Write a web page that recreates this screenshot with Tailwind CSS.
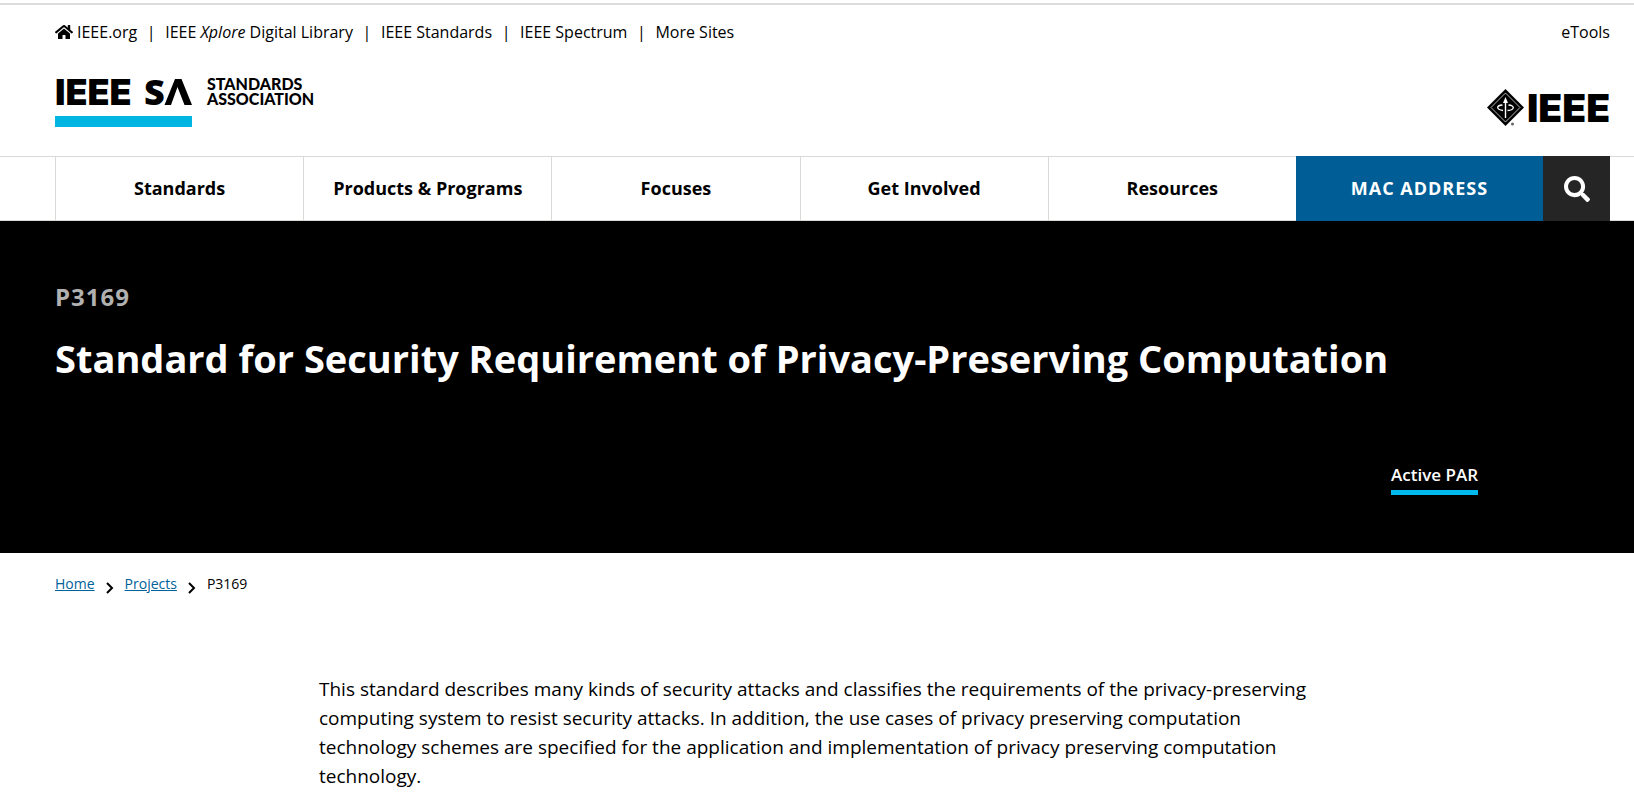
<!DOCTYPE html>
<html lang="en">
<head>
    <meta charset="UTF-8">
    <meta name="viewport" content="width=device-width, initial-scale=1.0">
    <title>IEEE SA - P3169</title>
    <script src="https://cdn.jsdelivr.net/npm/@tailwindcss/browser@4"></script>
</head>
<body class="bg-white text-black font-['Open_Sans',sans-serif]">

    <header class="mt-[3px] border-t-2 border-[#dcdcdc]">
        <!-- Meta navigation -->
        <div class="flex items-center justify-between pl-[55px] pr-6 pt-[15px] text-base leading-6 font-medium">
            <nav class="flex items-center" aria-label="IEEE sites">
                <a href="#" class="flex items-center gap-1">
                    <svg class="w-[18px] h-4" viewBox="0 0 576 512" fill="currentColor" aria-hidden="true">
                        <path d="M280.37 148.26L96 300.11V464a16 16 0 0 0 16 16l112.06-.29a16 16 0 0 0 15.92-16V368a16 16 0 0 1 16-16h64a16 16 0 0 1 16 16v95.64a16 16 0 0 0 16 16.05L464 480a16 16 0 0 0 16-16V300L295.67 148.26a12.19 12.19 0 0 0-15.3 0zM571.6 251.47L488 182.56V44.05a12 12 0 0 0-12-12h-56a12 12 0 0 0-12 12v72.61L318.47 43a48 48 0 0 0-61 0L4.34 251.47a12 12 0 0 0-1.6 16.9l25.5 31A12 12 0 0 0 45.15 301l235.22-193.74a12.19 12.19 0 0 1 15.3 0L530.9 301a12 12 0 0 0 16.9-1.6l25.5-31a12 12 0 0 0-1.7-16.93z"/>
                    </svg>
                    <span>IEEE.org</span>
                </a>
                <span class="w-7 text-center">|</span>
                <a href="#">IEEE <em>Xplore</em> Digital Library</a>
                <span class="w-7 text-center">|</span>
                <a href="#">IEEE Standards</a>
                <span class="w-7 text-center">|</span>
                <a href="#">IEEE Spectrum</a>
                <span class="w-7 text-center">|</span>
                <a href="#">More Sites</a>
            </nav>
            <a href="#">eTools</a>
        </div>

        <!-- Logos -->
        <div class="flex items-start justify-between pl-[55px] pr-6 pt-[21px] pb-[25px]">
            <a href="#" aria-label="IEEE SA Standards Association">
                <svg class="w-[270px] h-[62px]" viewBox="0 -8 270 62" fill="#000" font-family="Lato, sans-serif" font-weight="900">
                    <text x="0" y="32" font-size="36" font-family="Inter, sans-serif">IEEE</text>
                    <text x="89" y="32" font-size="36" font-family="Open Sans, sans-serif">S</text>
                    <path d="M109.500 32L120 6H126.500L137 32H129.500L122.500 14L116 32Z"/>
                    <text x="152" y="17" font-size="16">STANDARDS</text>
                    <text x="152" y="32" font-size="16">ASSOCIATION</text>
                    <rect x="0" y="43" width="137" height="11" fill="#00b5e2"/>
                </svg>
            </a>
            <a href="#" class="pt-5" aria-label="IEEE">
                <svg class="w-[123px] h-[46px]" viewBox="0 -4 123 46" fill="#000">
                    <path d="M18.500 0L37 18.500L18.500 37L0 18.500Z"/>
                    <path d="M18.500 4L33 18.500L18.500 33L4 18.500Z" fill="none" stroke="#fff" stroke-opacity=".7" stroke-width="1"/>
                    <path d="M18.500 8L21 14H19.200V29H17.800V14H16Z" fill="#fff"/>
                    <path d="M16 21.500C9 20.500 9 16.500 15.500 16M21.500 16C28 16.500 28 21 20.500 21.500" fill="none" stroke="#fff" stroke-width="1.300"/>
                    <circle cx="25.500" cy="35" r="1.500" fill="#666"/>
                    <text x="40" y="33" font-family="Inter, sans-serif" font-weight="900" font-size="39">IEEE</text>
                </svg>
            </a>
        </div>

        <!-- Main navigation -->
        <nav class="flex h-[65px] pl-[55px] pr-6 border-y border-[#d9d9d6] text-lg font-bold" aria-label="Main">
            <a href="#" class="flex-1 flex items-center justify-center pb-0.5 border-l border-[#d9d9d6]">Standards</a>
            <a href="#" class="flex-1 flex items-center justify-center pb-0.5 border-l border-[#d9d9d6]">Products &amp; Programs</a>
            <a href="#" class="flex-1 flex items-center justify-center pb-0.5 border-l border-[#d9d9d6]">Focuses</a>
            <a href="#" class="flex-1 flex items-center justify-center pb-0.5 border-l border-[#d9d9d6]">Get Involved</a>
            <a href="#" class="flex-1 flex items-center justify-center pb-0.5 border-l border-[#d9d9d6]">Resources</a>
            <a href="#" class="flex-1 flex items-center justify-center pb-0.5 -my-px bg-[#005d95] text-white tracking-[1px]">MAC ADDRESS</a>
            <button type="button" class="w-[67px] flex items-center justify-center -my-px bg-[#252525] text-white" aria-label="Search">
                <svg class="size-[26px]" viewBox="0 0 512 512" fill="currentColor">
                    <path d="M505 442.700L405.300 343c-4.500-4.500-10.600-7-17-7H372c27.600-35.300 44-79.700 44-128C416 93.100 322.900 0 208 0S0 93.100 0 208s93.100 208 208 208c48.300 0 92.700-16.400 128-44v16.300c0 6.400 2.500 12.500 7 17l99.700 99.700c9.400 9.400 24.600 9.400 33.900 0l28.300-28.300c9.400-9.400 9.400-24.600.1-34zM208 336c-70.700 0-128-57.200-128-128 0-70.700 57.200-128 128-128 70.700 0 128 57.200 128 128 0 70.700-57.200 128-128 128z"/>
                </svg>
            </button>
        </nav>
    </header>

    <main>
        <!-- Project banner -->
        <section class="bg-black text-white pl-[55px] pr-6 pt-[60px] pb-[58px]">
            <p class="text-2xl leading-8 font-bold tracking-[1px] text-[#b1b1b1]">P3169</p>
            <h1 class="mt-[18px] text-[38px] leading-[54px] font-bold">Standard for Security Requirement of Privacy-Preserving Computation</h1>
            <div class="mt-[78px] pr-[132px] flex justify-end">
                <span class="border-b-5 border-[#00b9ed] pb-[3px] text-[17px] leading-6 font-semibold">Active PAR</span>
            </div>
        </section>

        <!-- Breadcrumb -->
        <nav class="flex items-center pl-[55px] pr-6 pt-[21px] text-sm leading-5 font-medium" aria-label="Breadcrumb">
            <a href="#" class="text-[#00629b] underline">Home</a>
            <svg class="w-2 h-3 mx-[11px] mt-2" viewBox="0 0 8 12" fill="none" stroke="#000" stroke-width="2"><path d="M1 1L6 6L1 11"/></svg>
            <a href="#" class="text-[#00629b] underline">Projects</a>
            <svg class="w-2 h-3 mx-[11px] mt-2" viewBox="0 0 8 12" fill="none" stroke="#000" stroke-width="2"><path d="M1 1L6 6L1 11"/></svg>
            <span>P3169</span>
        </nav>

        <p class="mx-auto mt-[81px] max-w-[996px] text-[19px] leading-[29px]">This standard describes many kinds of security attacks and classifies the requirements of the privacy-preserving computing system to resist security attacks. In addition, the use cases of privacy preserving computation technology schemes are specified for the application and implementation of privacy preserving computation technology.</p>
    </main>

</body>
</html>
